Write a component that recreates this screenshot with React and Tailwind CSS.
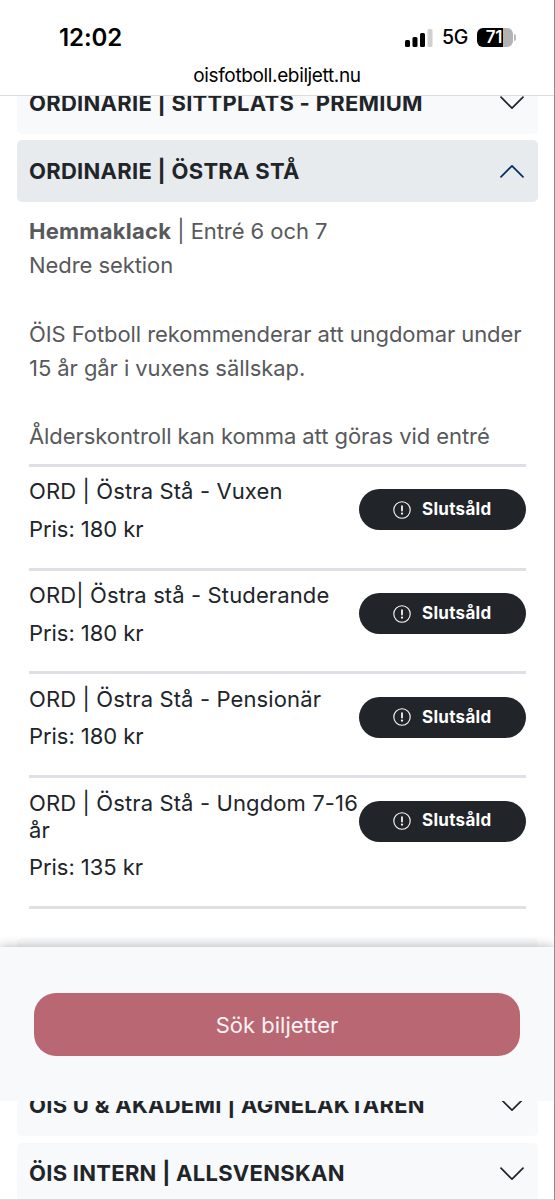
import clsx from "clsx";

const TICKETS = [
  { name: "ORD | Östra Stå - Vuxen", price: "180 kr" },
  { name: "ORD| Östra stå - Studerande", price: "180 kr" },
  { name: "ORD | Östra Stå - Pensionär", price: "180 kr" },
  { name: "ORD | Östra Stå - Ungdom 7-16 år", price: "135 kr" },
];

const Chevron = ({ open }) => (
  <svg
    viewBox="0 0 24 14"
    fill="none"
    strokeWidth="1.7"
    strokeLinecap="round"
    strokeLinejoin="round"
    className={clsx(
      "w-6 h-3.5 shrink-0",
      open ? "stroke-[#052c65] rotate-180" : "stroke-[#212529]"
    )}
  >
    <path d="M1 1.2 12 12.2 23 1.2" />
  </svg>
);

const SectionHeader = ({ title, open }) => (
  <div
    className={clsx(
      "flex items-center justify-between h-[62px] shrink-0 pl-3 pr-3.5 rounded-[5px]",
      open ? "bg-[#e7ebee]" : "bg-[#f8f9fb]"
    )}
  >
    <h2 className="text-[22px] font-bold tracking-[0.27px] whitespace-nowrap text-[#212529]">
      {title}
    </h2>
    <Chevron open={open} />
  </div>
);

const StatusBar = () => (
  <div className="flex items-center justify-between h-[75px] pl-[59px] pr-[38px]">
    <span className="text-[24px] font-semibold tracking-[-0.1px]">12:02</span>

    <div className="flex items-center">
      {/* Signal */}
      <svg viewBox="0 0 28 18" className="w-7 h-[18px]">
        <rect x="0" y="11" width="5" height="7" rx="1.5" />
        <rect x="7.5" y="8" width="5" height="10" rx="1.5" />
        <rect x="15" y="4" width="5" height="14" rx="1.5" />
        <rect x="22.5" y="0" width="5" height="18" rx="1.5" fill="#d0d0d0" />
      </svg>
      <span className="ml-[9px] text-[19.5px] font-medium tracking-[-0.3px]">5G</span>

      {/* Battery */}
      <div className="ml-[9px] flex items-center justify-center w-9 h-[19px] rounded-[6px] bg-linear-to-r from-black from-71% to-[#b3b3b3] to-71%">
        <span className="-ml-0.5 text-[17px] font-semibold tracking-[-0.3px] text-white">71</span>
      </div>
      <div className="ml-px w-0.5 h-[7px] rounded-r-full bg-[#bbb]" />
    </div>
  </div>
);

const SoldOutButton = () => (
  <button
    disabled
    className="flex items-center h-[41px] w-[167px] shrink-0 mt-[22.5px] pl-[34px] rounded-full bg-[#212529] text-white"
  >
    <svg viewBox="0 0 18 18" fill="none" className="w-[18px] h-[18px]">
      <circle cx="9" cy="9" r="8.2" stroke="#fff" strokeWidth="1.1" />
      <path d="M9 5v4.6" stroke="#fff" strokeWidth="1.7" strokeLinecap="round" />
      <circle cx="9" cy="12.6" r="1.1" fill="#fff" />
    </svg>
    <span className="ml-[11px] text-[17px] font-bold tracking-[0.3px]">Slutsåld</span>
  </button>
);

const TicketRow = ({ ticket }) => (
  <li className="flex items-start justify-between border-b-3 border-[#dee0e6] pb-[21.8px]">
    <div className="w-[331px] pt-[11.5px] text-[#212529]">
      <h3 className="mb-[6.5px] text-[22px] leading-[27px] tracking-[0.12px] -mr-1">
        {ticket.name}
      </h3>
      <p className="text-[22px] leading-[34px] tracking-[-0.05px]">Pris: {ticket.price}</p>
    </div>
    <SoldOutButton />
  </li>
);

const App = () => {
  return (
    <div className="flex flex-col w-[555px] h-[1200px] overflow-hidden bg-white border-r border-[#8e8e90] font-['Inter',sans-serif] text-black">
      <header className="h-24 shrink-0 border-b border-[#dcdcdc]">
        <StatusBar />
        <div className="-mt-[11px] text-center text-[19px] leading-[24px] tracking-[-0.36px]">
          oisfotboll.ebiljett.nu
        </div>
      </header>

      <main className="flex flex-col h-[851px] shrink-0 pl-[17px] pr-4 overflow-hidden">
        <div className="flex flex-col justify-end h-[38px] shrink-0 overflow-hidden">
          <SectionHeader title="ORDINARIE | SITTPLATS - PREMIUM" />
        </div>

        <div className="mt-1.5 flex flex-col">
          <SectionHeader title="ORDINARIE | ÖSTRA STÅ" open />

          <div className="px-3 pt-3">
            <div className="text-[22px] leading-[34.15px] tracking-[-0.07px] text-[#58595b]">
              <p>
                <strong className="font-bold tracking-[0.25px]">Hemmaklack</strong> | Entré 6 och 7
              </p>
              <p>Nedre sektion</p>
              <p className="mt-[34.3px]">
                ÖIS Fotboll rekommenderar att ungdomar under
                <br />
                15 år går i vuxens sällskap.
              </p>
              <p className="mt-[34px]">Ålderskontroll kan komma att göras vid entré</p>
            </div>

            <ul className="mt-[10.7px] border-t-3 border-[#dee0e6]">
              {TICKETS.map((ticket) => (
                <TicketRow key={ticket.name} ticket={ticket} />
              ))}
            </ul>
          </div>
        </div>

        {/* Next section, mostly behind the search bar */}
        <div className="mt-[29px] h-[62px] shrink-0 rounded-[5px] bg-[#f8f9fb]" />
      </main>

      <div className="relative h-[154px] shrink-0 px-[34px] pt-[46px] bg-[#f8f9fb] shadow-[0_-1px_10px_rgba(0,0,0,0.25)]">
        <button className="w-full h-[62.5px] pt-0.5 rounded-[22px] bg-[#b86773] text-[22px] text-[#fbf3f4]">
          Sök biljetter
        </button>
      </div>

      <div className="relative flex flex-col flex-1 pl-[17px] pr-4 bg-white border-b border-[#d8d8d8] overflow-hidden">
        <div className="flex flex-col justify-end h-[35px] shrink-0 overflow-hidden">
          <SectionHeader title="ÖIS U & AKADEMI | AGNELÄKTAREN" />
        </div>
        <div className="mt-[6.5px]">
          <SectionHeader title="ÖIS INTERN | ALLSVENSKAN" />
        </div>
      </div>
    </div>
  );
};

export default App;
